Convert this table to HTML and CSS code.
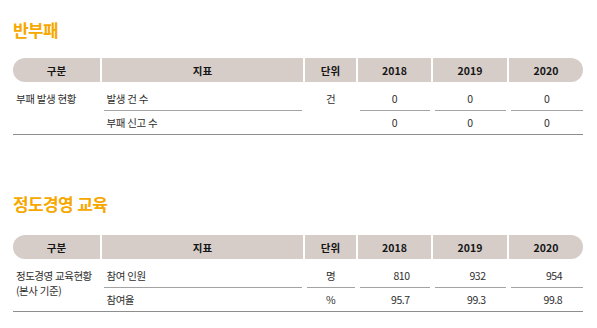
FILE: index.html
```html
<!DOCTYPE html>
<html lang="ko">
<head>
<meta charset="utf-8">
<title>반부패 · 정도경영 교육</title>
<link rel="stylesheet" href="styles.css">
</head>
<body>
<main class="page">
  <section class="block block-1">
    <h2 class="title">반부패</h2>
    <div class="grid head">
      <div class="hc hc-first">구분</div>
      <div class="hc">지표</div>
      <div class="hc">단위</div>
      <div class="hc">2018</div>
      <div class="hc">2019</div>
      <div class="hc hc-last">2020</div>
    </div>
    <div class="grid body">
      <div class="c cat">부패 발생 현황</div>
      <div class="c ind r1 line">발생 건 수</div>
      <div class="c unit unit-span">건</div>
      <div class="c num center y1 r1 line">0</div>
      <div class="c num center y2 r1 line">0</div>
      <div class="c num center y3 r1 line last">0</div>
      <div class="c ind r2">부패 신고 수</div>
      <div class="c num center y1 r2">0</div>
      <div class="c num center y2 r2">0</div>
      <div class="c num center y3 r2 last">0</div>
    </div>
  </section>

  <section class="block block-2">
    <h2 class="title">정도경영 교육</h2>
    <div class="grid head">
      <div class="hc hc-first">구분</div>
      <div class="hc">지표</div>
      <div class="hc">단위</div>
      <div class="hc">2018</div>
      <div class="hc">2019</div>
      <div class="hc hc-last">2020</div>
    </div>
    <div class="grid body">
      <div class="c cat">정도경영 교육현황<br>(본사 기준)</div>
      <div class="c ind r1 line">참여 인원</div>
      <div class="c unit r1 line">명</div>
      <div class="c num right y1 r1 line">810</div>
      <div class="c num right y2 r1 line">932</div>
      <div class="c num right y3 r1 line last">954</div>
      <div class="c ind r2">참여율</div>
      <div class="c unit r2">%</div>
      <div class="c num right y1 r2">95.7</div>
      <div class="c num right y2 r2">99.3</div>
      <div class="c num right y3 r2 last">99.8</div>
    </div>
  </section>
</main>
</body>
</html>
```
FILE: styles.css
```css
html, body {
  margin: 0;
  padding: 0;
  background: #ffffff;
}

body {
  font-family: "Noto Sans CJK KR", "Noto Sans", sans-serif;
  color: #333333;
}

.page {
  width: 570px;
  padding: 18px 14px 0 13px;
}

.title {
  margin: 0;
  height: 24px;
  line-height: 24px;
  font-size: 17px;
  font-weight: 700;
  letter-spacing: -0.6px;
  color: #f6a800;
}

.block-1 .head { margin-top: 16px; }
.block-2 { margin-top: 57px; }
.block-2 .head { margin-top: 19px; }

.grid {
  display: grid;
  grid-template-columns: 87px 201px 51px 73px 74px 74px;
  column-gap: 2px;
}

.head {
  height: 24px;
}

.hc {
  background: #d6cdc9;
  display: flex;
  align-items: center;
  justify-content: center;
  font-size: 10.5px;
  font-weight: 700;
  color: #151515;
}

.hc-first { border-radius: 12px 0 0 12px; }
.hc-last { border-radius: 0 12px 12px 0; }

.body {
  margin-top: 4px;
  grid-template-rows: 25px 23px;
  border-bottom: 1px solid #8e8e8e;
}

.c {
  font-size: 10.5px;
  letter-spacing: -0.5px;
  color: #2e2e2e;
  display: flex;
  align-items: center;
  margin: 0 1.5px;
}

.line {
  border-bottom: 1px solid #a3a3a3;
}

.last { margin-right: 0; }

.cat {
  grid-column: 1;
  grid-row: 1 / span 2;
  align-items: flex-start;
  padding: 5px 0 0 3px;
  line-height: 15px;
  margin: 0;
}

.ind { grid-column: 2; padding-left: 3px; }

.unit { grid-column: 3; justify-content: center; }
.unit-span { grid-row: 1 / span 2; align-items: flex-start; padding-top: 5px; line-height: 15px; }

.y1 { grid-column: 4; }
.y2 { grid-column: 5; }
.y3 { grid-column: 6; }

.r1 { grid-row: 1; }
.r2 { grid-row: 2; }

.num.center { justify-content: center; }
.num.right { justify-content: flex-end; padding-right: 20px; }
.num.right.last { padding-right: 21px; }
```
